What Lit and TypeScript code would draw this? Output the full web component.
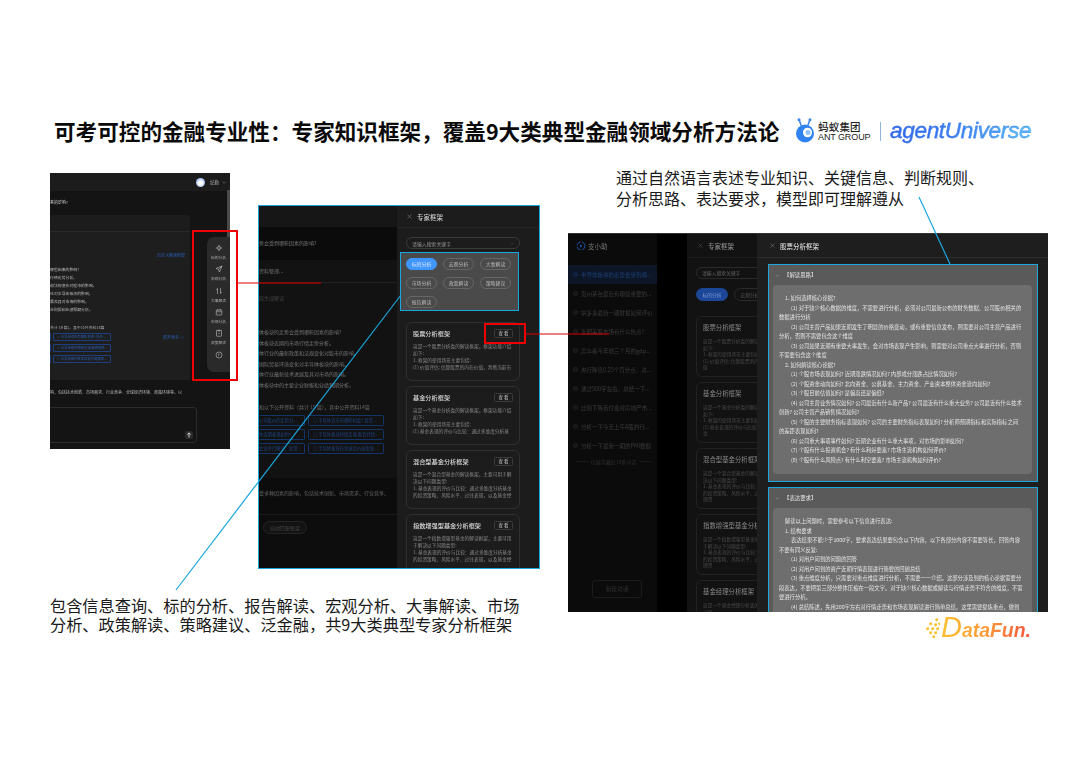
import { LitElement, html, css, svg } from "lit";
import { customElement } from "lit/decorators.js";

const closeIcon = html`<svg class="x" viewBox="0 0 10 10"><path d="M1 1l8 8M9 1l-8 8" stroke="currentColor" stroke-width="1" fill="none"/></svg>`;
const chevron = html`<svg class="chev" viewBox="0 0 10 6"><path d="M1 1l4 4 4-4" stroke="currentColor" stroke-width="1" fill="none"/></svg>`;
const circleMinus = html`<svg class="ci" viewBox="0 0 10 10"><circle cx="5" cy="5" r="4" stroke="currentColor" fill="none"/><path d="M3 5h4" stroke="currentColor"/></svg>`;

const sideIcons = [
  ["标的分析", svg`<circle cx="8" cy="8" r="3.4" fill="none" stroke="currentColor"/><path d="M8 1.5v3M8 11.5v3M1.5 8h3M11.5 8h3" stroke="currentColor"/><circle cx="8" cy="8" r="1" fill="currentColor"/>`],
  ["宏观分析", svg`<path d="M14 2L2 7l5 2 2 5z" fill="none" stroke="currentColor"/><path d="M7 9l7-7" stroke="currentColor"/>`],
  ["大事解读", svg`<path d="M5 14V3L2.500 6M11 2v11l2.500-3" fill="none" stroke="currentColor"/>`],
  ["市场分析", svg`<rect x="2.500" y="4" width="11" height="10" rx="1" fill="none" stroke="currentColor"/><path d="M5.500 2v3M10.500 2v3M3 7.500h10" stroke="currentColor"/>`],
  ["政策解读", svg`<rect x="3" y="2.500" width="10" height="12" rx="1" fill="none" stroke="currentColor"/><path d="M6 2v2h4V2M6.500 9h3" stroke="currentColor" fill="none"/>`],
];

const firstSteps = ["体板块的走势会受到哪些因素的影响?", "体板块近期的市场行情走势分析。", "体行业的最新政策和法规变化对股市的影响。", "国际贸易环境变化对半导体板块的影响。", "体行业最新技术进展及其对市场的影响。", "体板块中的主要企业财报和业绩预期分析。"];

const drawerCards = [
  ["股票分析框架", "这是一个股票分析类的解读框架，框架功能介绍如下:", "1. 框架的使用场景主要包括:", "(1) 价值评估: 估算股票的内在价值，判断当前市值"],
  ["基金分析框架", "这是一个基金分析类的解读框架，框架功能介绍如下:", "1. 框架的使用场景主要包括:", "(1) 基金表现的评价与比较：通过多维度分析基金"],
  ["混合型基金分析框架", "这是一个混合型基金的解读框架，主要可用于解决以下问题类型:", "1. 基金表现的评价与比较：通过多维度分析基金的投资策略、风险水平、过往表现，以及基金经理资", ""],
  ["指数增强型基金分析框架", "这是一个指数增强型基金的解读框架，主要可用于解决以下问题类型:", "1. 基金表现的评价与比较：通过多维度分析基金的投资策略、风险水平、过往表现，以及基金经理资", ""],
];

const chips = ["标的分析", "宏观分析", "大事解读", "市场分析", "政策解读", "策略建议", "报告解读"];
const history = ["半导体板块的走势会受到哪...", "贵州茅台最近有哪些重要的...", "拼多多最新一期财报如何评价", "近期美股市场有什么热点?", "怎么看今年前三个月的gdp...", "央行降息0.25个百分点，对...", "通过500字左右，总结一下...", "比例下降首付会对房地产市...", "分析一下今天上午A股的行...", "分析一下最新一期的PMI数据"];

const sec1: [number, string][] = [
  [1, "1. 如何选择核心论据?"],
  [2, "(1) 对于缺少核心数据的维度，不需要进行分析，必须对公司最新公布的财务数据、公司股价相关的数据进行分析"],
  [2, "(2) 公司主营产品如果近期发生了明显的价格变动，或有重要信息发布，则需要对公司主营产品进行分析，否则不需要包含这个维度"],
  [2, "(3) 公司如果近期有重要大事发生，会对市场表现产生影响，则需要对公司重点大事进行分析，否则不需要包含这个维度"],
  [1, "2. 如何解读核心论据?"],
  [2, "(1) 个股市场表现如何? 近期涨跌情况如何? 内部成分涨跌占比情况如何?"],
  [2, "(2) 个股资金动向如何? 北向资金、公募基金、主力资金、产业资本整体资金流向如何?"],
  [2, "(3) 个股目前估值如何? 是偏高还是偏低?"],
  [2, "(4) 公司主营业务情况如何? 公司最近有什么新产品? 公司最近有什么重大业务? 公司最近有什么技术创新? 公司主营产品销售情况如何?"],
  [2, "(5) 个股的主要财务指标表现如何? 公司的主要财务指标表现如何? 分析师预期指标和实际指标之间的差距表现如何?"],
  [2, "(6) 公司重大事项事件如何? 近期企业有什么重大事项，对市场的影响如何?"],
  [2, "(7) 个股有什么投资机会? 有什么利好要素? 市场主流机构如何评价?"],
  [2, "(8) 个股有什么风险点? 有什么利空要素? 市场主流机构如何评价?"],
];
const sec2: [number, string][] = [
  [1, "解读以上问题时，需要参考以下信息进行表达:"],
  [1, "1. 结构要求"],
  [2, "表达结果不能少于1000字，要求表达结果要包含以下内容，以下各部分内容不需要等长，回答内容不要有同义反复:"],
  [2, "(1) 对用户问到的问题的回答"],
  [2, "(2) 对用户问到的资产近期行情表现进行简要的回顾总结"],
  [2, "(3) 重点维度分析，只需要对重点维度进行分析，不需要一一介绍。这部分涉及到的核心论据需要分段表达，不要把第三部分整体压缩在一段文字。对于缺少核心数据或解读与行情走势不符合的维度，不需要进行分析。"],
  [2, "(4) 总结陈述，先用200字左右对行情走势和市场表现解读进行简单总结，这里需要提炼重点，做到言简意赅"],
];

@customElement("app-root")
export class AppRoot extends LitElement {
  static styles = css`
    :host { display: block; position: relative; width: 1080px; height: 763px; background: #fff; overflow: hidden;
      font-family: "Noto Sans CJK SC", "Liberation Sans", sans-serif; color: #000; }
    .title { position: absolute; left: 54px; top: 116px; font-size: 21.600px; line-height: 30px; font-weight: 700; white-space: nowrap; color: #0a0a0a; }
    .note { position: absolute; white-space: nowrap; color: #1a1a1a; }
    .note.top { left: 616px; top: 167px; font-size: 16px; line-height: 21px; }
    .note.bottom { left: 50px; top: 596px; font-size: 16.200px; line-height: 18.500px; }

    .brand { position: absolute; left: 796px; top: 116px; width: 240px; height: 30px; display: flex; align-items: center; }
    .ant-text { margin-left: 3px; display: flex; flex-direction: column; color: #222; width: 60px; }
    .ant-cn { font-size: 10.500px; line-height: 12px; font-weight: 500; letter-spacing: .2px; }
    .ant-en { font-family: "Liberation Sans", sans-serif; font-size: 9px; line-height: 9px; white-space: nowrap; letter-spacing: -.1px; }
    .divider { width: 1px; height: 19px; background: #8fb4e0; margin-left: 2px; }
    .agent { margin-left: 9px; font-family: "Liberation Sans", sans-serif; font-style: italic; font-weight: 400; font-size: 22.500px; white-space: nowrap; letter-spacing: -.3px;
      -webkit-text-stroke: .3px #3a7cf0;
      background: linear-gradient(90deg, #2f63e6 0%, #3a7cf0 45%, #5cc8f8 100%); -webkit-background-clip: text; background-clip: text; color: transparent; }

    .datafun { position: absolute; left: 926px; top: 614px; width: 106px; height: 28px; display: flex; align-items: center; }
    .dfname { font-family: "Liberation Sans", sans-serif; font-style: italic; font-weight: 700; font-size: 19.400px; line-height: 28px; white-space: nowrap; margin-left: 1px;
      background: linear-gradient(90deg, #fbc02d, #ff9a3c 50%, #f4533a); -webkit-background-clip: text; background-clip: text; color: transparent; }
    .dfname b { font-size: 29px; font-weight: 400; }

    .panel { position: absolute; overflow: hidden; filter: blur(.35px); box-sizing: border-box; }

    /* panel 1 */
    .p1 { left: 50px; top: 173px; width: 180px; height: 276px; background: #141414; color: #999; font-size: 3.900px; display: flex; flex-direction: column; }
    .p1-top { height: 18px; background: #1c1c1c; display: flex; align-items: center; justify-content: flex-end; gap: 3px; padding-right: 4px; flex: none; }
    .avatar { width: 9px; height: 9px; border-radius: 50%; background: radial-gradient(circle at 50% 55%, #fff 30%, #a9c6f3 60%); }
    .p1-top .name { margin-left: 2px; font-size: 4.500px; color: #aaa; }
    .p1-top .chev { width: 4px; height: 3px; color: #aaa; }
    .p1-q { height: 24px; line-height: 22px; flex: none; color: #c8c8c8; font-size: 4px; }
    .p1-card { width: 140px; height: 165px; background: #1e1e1e; flex: none; display: flex; flex-direction: column; }
    .p1-card-h { height: 16px; background: #1c1c1c; border-bottom: 1px solid #2a2a2a; flex: none; }
    .p1-link { height: 16px; margin-top: 15px; padding-right: 5px; text-align: right; color: #2a5fb8; font-size: 4px; line-height: 16px; flex: none; }
    .p1-lines { margin-top: 2px; line-height: 8.100px; color: #bbb; font-size: 3.900px; white-space: nowrap; }
    .p1-count { margin-top: 9px; line-height: 8px; color: #aaa; display: flex; }
    .p1-rows { margin-top: 2px; display: grid; grid-template-columns: 1px 58px 1fr; grid-auto-rows: 8px; gap: 3px 2px; }
    .stub { background: #173a78; }
    .p1-chip { border: 1px solid #1d3f7e; border-radius: 1px; font-size: 3.300px; line-height: 6px; color: #2a5fb8; padding-left: 3px; white-space: nowrap; overflow: hidden; box-sizing: border-box; height: 8px; }
    .p1-more { color: #2a5fb8; font-size: 4px; line-height: 8px; text-align: right; padding-right: 6px; }
    .p1-foot { margin-top: 8px; line-height: 8px; font-size: 4px; color: #bbb; white-space: nowrap; flex: none; }
    .p1-input { margin-top: 11px; width: 147px; height: 36px; border: 1px solid #2c2c2c; border-left: 0; border-radius: 0 4px 4px 0; box-sizing: border-box; display: flex; align-items: flex-end; justify-content: flex-end; padding: 0 3px 3px 0; flex: none; }
    .send { width: 8px; height: 8px; border-radius: 2px; background: #2a2a2a; color: #ddd; display: block; }
    .p1-side { position: absolute; right: 0; top: 64px; width: 23px; height: 135px; border-radius: 7px 0 0 7px; background: #2a2a2a; display: flex; flex-direction: column; align-items: center; padding-top: 7px; box-sizing: border-box; color: #bbb; }
    .side-item { height: 23px; display: flex; flex-direction: column; align-items: center; font-size: 3.800px; line-height: 6px; white-space: nowrap; color: #aaa; }
    .side-item svg { width: 8px; height: 8px; margin-bottom: 3px; color: #ddd; flex: none; }
    .p1-scroll { position: absolute; right: 0; top: 17px; width: 3px; height: 47px; background: #4a4a4a; }

    /* panel 2 */
    .p2 { left: 258px; top: 205px; width: 282px; height: 364px; border: 1.500px solid #1ba6dd; background: #0c0c0c; display: flex; }
    .p2-left { width: 138px; flex: none; display: flex; flex-direction: column; color: #6c6c6c; font-size: 5px; white-space: nowrap; overflow: hidden; }
    .p2-h { height: 21px; background: #161616; flex: none; }
    .p2-q { height: 33px; line-height: 32px; background: #0b0b0b; color: #7a7a7a; flex: none; }
    .p2-b { flex: none; height: 218px; background: #121212; display: flex; flex-direction: column; }
    .p2-b1 { height: 22px; line-height: 22px; border-bottom: 1px solid #202020; flex: none; }
    .p2-b2 { height: 30px; line-height: 30px; color: #444; flex: none; }
    .p2-lines { line-height: 10.600px; margin-top: 14px; color: #767676; }
    .p2-count { margin-top: 11px; line-height: 10px; }
    .p2-rows { display: grid; grid-template-columns: 46px 76px; grid-auto-rows: 11px; gap: 3px 3px; margin-top: 3px; }
    .p2-chip { border: 1px solid #14356a; border-radius: 1.500px; color: #1f4585; font-size: 4.300px; line-height: 9px; padding-left: 4px; overflow: hidden; box-sizing: border-box; }
    .p2-chip.stub2 { border-left: 0; padding-left: 0; }
    .p2-foot { height: 36px; line-height: 30px; background: #0c0c0c; flex: none; color: #666; padding-top: 0; }
    .p2-bar { flex: 1; border-top: 1px solid #1a1a1a; padding: 6px 0 0 4px; background: #0d0d0d; }
    .auto { display: inline-block; height: 13px; line-height: 11px; padding: 0 6px; border: 1px solid #242424; border-radius: 7px; box-sizing: border-box; color: #444; background: #131313; }
    .p2-drawer { flex: 1; background: #1c1c1c; display: flex; flex-direction: column; }
    .dr-h { height: 22px; display: flex; align-items: center; padding-left: 10px; gap: 5px; border-bottom: 1px solid #252525; font-size: 6.500px; color: #ccc; font-weight: 500; flex: none; box-sizing: border-box; }
    .x { width: 5px; height: 5px; color: #888; flex: none; }
    .search { margin: 9px 0 0 9px; width: 114px; height: 12px; border: 1px solid #3a3a3a; border-radius: 6px; box-sizing: border-box; display: flex; align-items: center; justify-content: space-between; padding: 0 5px; font-size: 4.900px; color: #999; flex: none; }
    .search .chev { width: 4px; height: 3px; color: #666; }
    .filter { margin: 3px 0 0 3px; width: 119px; height: 59px; background: #4a4a4a; border: 1px solid #1ba6dd; box-sizing: border-box; padding: 5px 0 0 5px; display: flex; flex-wrap: wrap; align-content: flex-start; gap: 7px 6px; flex: none; }
    .fchip { width: 31px; height: 12px; border: 1px solid #666; border-radius: 6px; box-sizing: border-box; text-align: center; font-size: 4.900px; line-height: 10px; color: #bbb; }
    .fchip.on { background: #4096ff; border-color: #4096ff; color: #d8e8ff; }
    .cards { margin: 11px 0 0 9px; width: 114px; display: flex; flex-direction: column; gap: 5px; flex: none; }
    .card { height: 59px; border: 1px solid #303030; border-radius: 6px; box-sizing: border-box; padding: 5px 6px 0 6px; flex: none; }
    .card-h { display: flex; align-items: center; justify-content: space-between; height: 11px; font-size: 6.200px; font-weight: 500; color: #ddd; white-space: nowrap; }
    .view { width: 19px; height: 9px; border: 1px solid #3a3a3a; border-radius: 1.500px; box-sizing: border-box; font-size: 4.500px; line-height: 7px; text-align: center; color: #bbb; white-space: pre; }
    .card-b { margin-top: 4px; font-size: 4.700px; line-height: 7px; color: #888; height: 28px; overflow: hidden; }

    /* panel 3 */
    .p3 { left: 568px; top: 233px; width: 480px; height: 379px; background: #000; display: flex; border-top: 1px solid #333; }
    .p3-left { width: 89px; flex: none; background: #0b0b0b; display: flex; flex-direction: column; align-items: stretch; position: relative; }
    .p3-logo { height: 24px; display: flex; align-items: center; padding-left: 8px; gap: 2px; color: #666; font-size: 6.500px; font-weight: 500; flex: none; }
    .p3-logo svg { width: 10px; height: 10px; color: #1d4e9a; }
    .hist { margin-top: 7px; flex: none; }
    .hitem { height: 19px; display: flex; align-items: center; padding-left: 5px; gap: 3px; font-size: 5.500px; color: #3b3b3b; white-space: nowrap; overflow: hidden; }
    .hitem.on { background: #0c1626; color: #1d3f78; }
    .ci { width: 5px; height: 5px; flex: none; }
    .hnote { margin-top: 0; height: 12px; display: flex; align-items: center; gap: 3px; padding: 0 6px 0 8px; font-size: 5px; color: #2e2e2e; white-space: nowrap; }
    .hnote i { flex: 1; height: 1px; background: #191919; }
    .newc { margin: auto 15px 14px 24px; height: 18px; border: 1px solid #1c1c1c; border-radius: 3px; text-align: center; font-size: 5.700px; line-height: 16px; color: #333; box-sizing: border-box; flex: none; }
    .p3-gap { width: 30px; flex: none; background: #000; }
    .p3-drawer { width: 70px; flex: none; background: #121212; overflow: hidden; color: #555; }
    .p3-drawer .dr-h { height: 24px; color: #8a8a8a; font-size: 6.500px; padding-left: 11px; border-bottom-color: #1c1c1c; }
    .p3-drawer .x { color: #555; }
    .p3d-in { width: 120px; padding-left: 9px; }
    .p3d-search { margin-top: 9px; width: 114px; height: 12px; border: 1px solid #2a2a2a; border-radius: 6px; box-sizing: border-box; font-size: 4.800px; line-height: 10px; padding-left: 5px; color: #666; }
    .p3d-chips { display: flex; gap: 6px; margin-top: 9px; }
    .p3d-chip { width: 32px; height: 13px; border: 1px solid #2a2a2a; border-radius: 7px; box-sizing: border-box; font-size: 4.800px; line-height: 11px; text-align: center; color: #555; }
    .p3d-chip.on { background: #1b4796; border-color: #1b4796; color: #7b9cd8; }
    .p3d-cards { margin-top: 15px; display: flex; flex-direction: column; gap: 5px; }
    .p3d-card { height: 61px; width: 114px; border: 1px solid #222; border-radius: 6px; box-sizing: border-box; padding: 6px; flex: none; }
    .p3d-t { font-size: 6.400px; line-height: 10px; color: #888; white-space: nowrap; }
    .p3d-b { margin-top: 5px; font-size: 4.700px; line-height: 6.500px; color: #4a4a4a; }
    .p3-main { flex: 1; background: #1e1e1e; display: flex; flex-direction: column; overflow: hidden; min-width: 0; }
    .p3-h { height: 24px; border-bottom: 1px solid #2c2c2c; box-sizing: border-box; display: flex; align-items: center; padding-left: 13px; gap: 5px; font-size: 6.500px; font-weight: 500; color: #ddd; flex: none; }
    .secs { padding: 6px 10px 0 11px; display: flex; flex-direction: column; gap: 5px; }
    .sec { border: 1px solid #1ba6dd; background: #5a5a5a; box-sizing: border-box; flex: none; padding: 0 5px 0 4px; }
    .sec.one { height: 218px; }
    .sec.two { height: 140px; }
    .sec-h { height: 20px; display: flex; align-items: center; gap: 5px; padding-left: 2px; font-size: 5.400px; color: #e4e4e4; }
    .sec-h .chev { width: 4px; height: 3px; color: #bbb; }
    .sec-b { background: #6e6e6e; border-radius: 4px; padding: 9px 9px 9px 6px; font-size: 5.300px; line-height: 9.500px; color: #e6e6e6; height: 189px; box-sizing: border-box; }
    .sec.two .sec-b { height: 200px; }
    .sec-b p { margin: 0; }
    .l1 { text-indent: 6px; }
    .l2 { text-indent: 12px; }

    .overlay { position: absolute; left: 0; top: 0; width: 1080px; height: 763px; pointer-events: none; }
  `;

  private sectionLines(lines: [number, string][]) {
    return lines.map(([lv, t]) => html`<p class=${lv === 1 ? "l1" : "l2"}>${t}</p>`);
  }

  private panel1() {
    return html`<section class="panel p1">
      <div class="p1-top"><span class="avatar"></span><span class="name">纪勤</span>${chevron}</div>
      <div class="p1-q">素的影响?</div>
      <div class="p1-card">
        <div class="p1-card-h"></div>
        <div class="p1-link">自定义解读框架</div>
        <div class="p1-lines">
          <div>哪些因素的影响?</div><div>行情走势分析。</div><div>和法规变化对股市的影响。</div><div>化对半导体板块的影响。</div><div>展及其对市场的影响。</div><div>业财报和业绩预期分析。</div>
        </div>
        <div class="p1-count">共计 19 篇)，其中公开资料14篇</div>
        <div class="p1-rows">
          ${[["半导体近市有哪些机会? 投资...","展开更多 ⓘ"],["半导体板块持续走强 能否持续...",""],["半导体板块在全球定价高度原...",""]].map(([c,m]) => html`
            <span class="stub"></span><span class="p1-chip">◎ ${c}</span><span class="p1-more">${m}</span>`)}
        </div>
      </div>
      <div class="p1-foot">响，包括技术创新、市场需求、行业竞争、全球经济环境、政策环境等。以</div>
      <div class="p1-input"><svg class="send" viewBox="0 0 8 8"><path d="M4 6.500V2M2.300 3.600L4 1.800l1.700 1.800" stroke="currentColor" stroke-width=".9" fill="none"/></svg></div>
      <div class="p1-scroll"></div>
      <div class="p1-side">
        ${sideIcons.map(([t, i]) => html`<div class="side-item"><svg viewBox="0 0 16 16">${i}</svg>${t}</div>`)}
        <div class="side-item"><svg viewBox="0 0 16 16"><circle cx="8" cy="8" r="6" fill="none" stroke="currentColor"/><path d="M8 4.500V8l-2 1.500" fill="none" stroke="currentColor"/></svg></div>
      </div>
    </section>`;
  }

  private panel2() {
    return html`<section class="panel p2">
      <div class="p2-left">
        <div class="p2-h"></div>
        <div class="p2-q">势会受到哪些因素的影响?</div>
        <div class="p2-b">
          <div class="p2-b1">资料整理...</div>
          <div class="p2-b2">段生成解读</div>
          <div class="p2-lines">${firstSteps.map(s => html`<div>${s}</div>`)}</div>
          <div class="p2-count">和以下公开资料（共计 19 篇），其中公开资料14篇</div>
          <div class="p2-rows">
            <span class="p2-chip stub2">公司股价的走势分...</span><span class="p2-chip">◎ 半导体近市有哪些机会? 投资...</span>
            <span class="p2-chip stub2">体近期表现如何?</span><span class="p2-chip">◎ 半导体板块持续走强 能否持续...</span>
            <span class="p2-chip stub2">会议举行解读，投资...</span><span class="p2-chip">◎ 半导体板块在全球定价高度原...</span>
          </div>
        </div>
        <div class="p2-foot">受多种因素的影响，包括技术创新、市场需求、行业竞争、</div>
        <div class="p2-bar"><span class="auto">自动匹配框架</span></div>
      </div>
      <div class="p2-drawer">
        <div class="dr-h">${closeIcon}专家框架</div>
        <div class="search">请输入搜索关键字${chevron}</div>
        <div class="filter">${chips.map((c, i) => html`<span class=${i === 0 ? "fchip on" : "fchip"}>${c}</span>`)}</div>
        <div class="cards">
          ${drawerCards.map(([t, a, b, c]) => html`<div class="card">
            <div class="card-h"><span>${t}</span><span class="view">查 看</span></div>
            <div class="card-b">${a}<br/>${b}${c ? html`<br/>${c}` : ""}</div>
          </div>`)}
        </div>
      </div>
    </section>`;
  }

  private panel3() {
    return html`<section class="panel p3">
      <div class="p3-left">
        <div class="p3-logo"><svg viewBox="0 0 10 10"><circle cx="5" cy="5" r="4" fill="none" stroke="currentColor" stroke-dasharray="5 1.500"/><path d="M4 3.300L6.500 5 4 6.700z" fill="currentColor"/></svg>支小助</div>
        <div class="hist">${history.map((h, i) => html`<div class=${i === 0 ? "hitem on" : "hitem"}>${circleMinus}<span>${h}</span></div>`)}</div>
        <div class="hnote"><i></i>仅展示最近10条对话<i></i></div>
        <div class="newc">新建对话</div>
      </div>
      <div class="p3-gap"></div>
      <div class="p3-drawer">
        <div class="dr-h">${closeIcon}专家框架</div>
        <div class="p3d-in">
          <div class="p3d-search">请输入搜索关键字</div>
          <div class="p3d-chips"><span class="p3d-chip on">标的分析</span><span class="p3d-chip">宏观分析</span></div>
          <div class="p3d-cards">
            ${[...drawerCards, ["基金经理分析框架", "这是一个基金经理分析类的解读框架，框架功能介绍", "", ""]].map(([t, a, b, c]) => html`<div class="p3d-card"><div class="p3d-t">${t}</div><div class="p3d-b">${a}<br/>${b}<br/>${c}</div></div>`)}
          </div>
        </div>
      </div>
      <div class="p3-main">
        <div class="p3-h">${closeIcon}股票分析框架</div>
        <div class="secs">
          <div class="sec one">
            <div class="sec-h">${chevron}【解读思路】</div>
            <div class="sec-b">${this.sectionLines(sec1)}</div>
          </div>
          <div class="sec two">
            <div class="sec-h">${chevron}【表达要求】</div>
            <div class="sec-b">${this.sectionLines(sec2)}</div>
          </div>
        </div>
      </div>
    </section>`;
  }

  render() {
    return html`
      <div class="title">可考可控的金融专业性：专家知识框架，覆盖9大类典型金融领域分析方法论</div>
      <div class="brand">
        <svg width="19" height="26" viewBox="0 0 19 26">
          <path d="M5 7L3 1.500M12 7l2-5.500" stroke="#3f86ee" stroke-width="1.600" fill="none" stroke-linecap="round"/>
          <circle cx="3" cy="1.800" r="1.500" fill="#3f86ee"/><circle cx="14" cy="1.800" r="1.500" fill="#3f86ee"/>
          <circle cx="9" cy="15.500" r="9" fill="#2f83f0"/>
          <ellipse cx="11.500" cy="14.500" rx="4.500" ry="4.800" fill="#fff"/>
          <circle cx="12" cy="14.500" r="2.500" fill="#8ec2fb"/>
        </svg>
        <div class="ant-text"><span class="ant-cn">蚂蚁集团</span><span class="ant-en">ANT GROUP</span></div>
        <span class="divider"></span>
        <span class="agent">agentUniverse</span>
      </div>

      <div class="note top">通过自然语言表述专业知识、关键信息、判断规则、<br/>分析思路、表达要求，模型即可理解遵从</div>
      ${this.panel1()}
      ${this.panel2()}
      ${this.panel3()}
      <div class="note bottom">包含信息查询、标的分析、报告解读、宏观分析、大事解读、市场<br/>分析、政策解读、策略建议、泛金融，共9大类典型专家分析框架</div>

      <div class="datafun">
        <svg width="14" height="20" viewBox="0 0 14 20">
          ${[[9,1],[3,5],[8,6],[12,5],[0,10],[5,10],[10,10],[3,14],[8,14],[6,18]].map(([x, y]) => svg`<rect x=${x} y=${y} width="2.600" height="2.600" fill="#fbc02d" transform="rotate(-20 ${x} ${y})"/>`)}
        </svg>
        <span class="dfname"><b>D</b>ataFun.</span>
      </div>

      <svg class="overlay" viewBox="0 0 1080 763">
        <rect x="193" y="231" width="44" height="149" fill="none" stroke="#ee0000" stroke-width="2"/>
        <path d="M238 283H321" stroke="#e00000" stroke-width="1.200"/>
        <rect x="485" y="324" width="40" height="19" fill="none" stroke="#ee0000" stroke-width="2"/>
        <path d="M526 334H609" stroke="#e00000" stroke-width="1.200"/>
        <path d="M176 590L401 295" stroke="#1ba6dd" stroke-width="1.200"/>
        <path d="M919 197L950 264" stroke="#1ba6dd" stroke-width="1.200"/>
      </svg>
    `;
  }
}
